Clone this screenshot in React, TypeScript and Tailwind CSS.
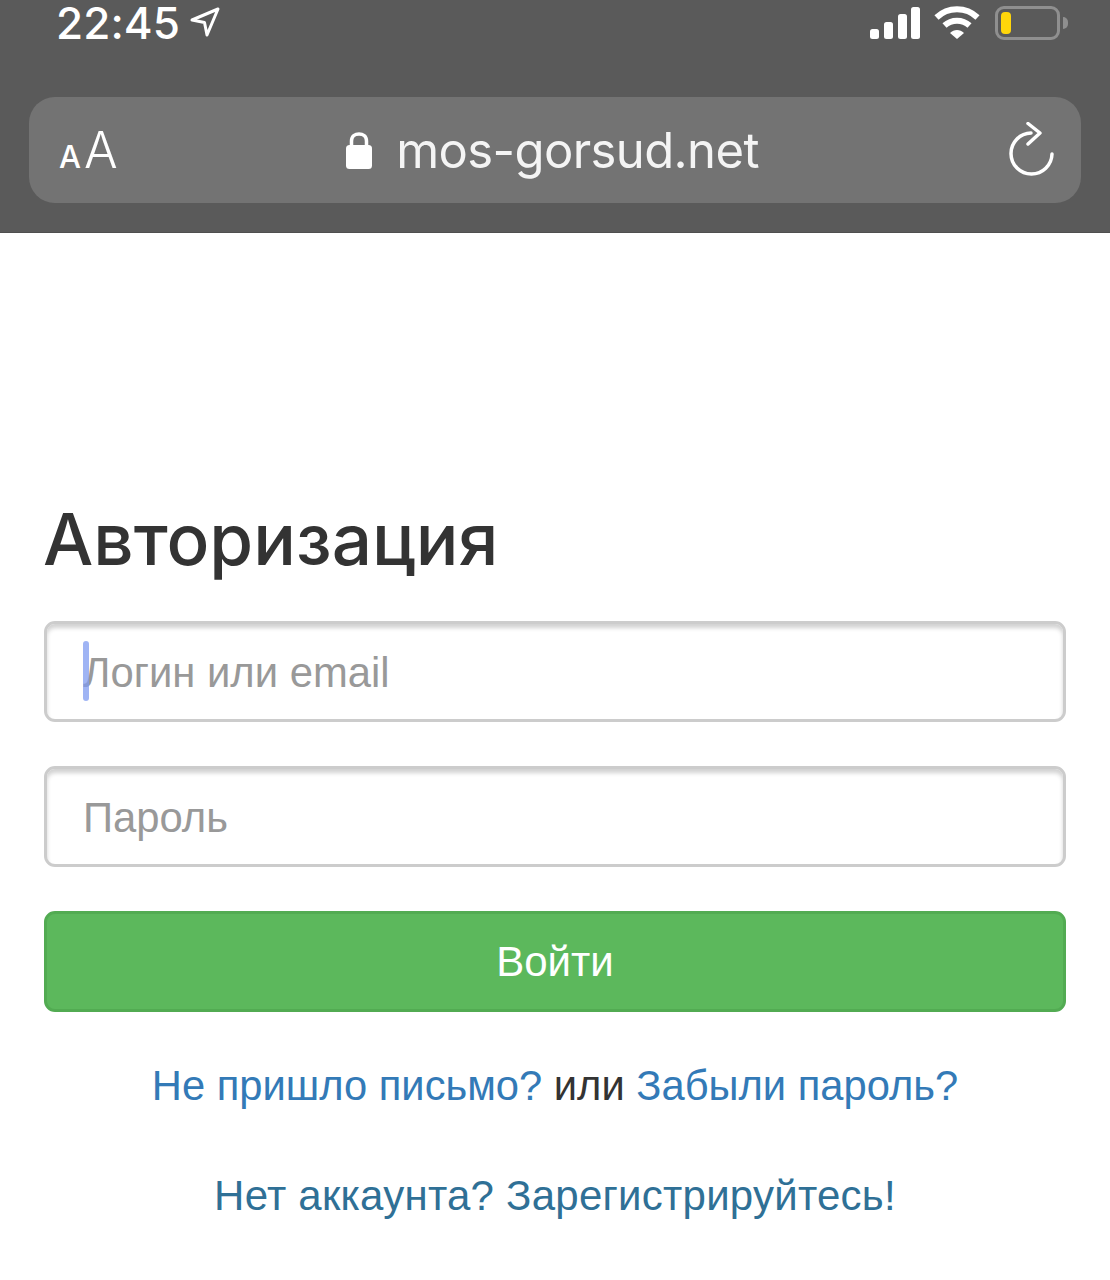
export default function App() {
  return (
    <div className="w-[1110px] h-[1280px] overflow-hidden bg-white font-['Liberation_Sans',Arial,sans-serif]">
      {/* Safari top chrome */}
      <div className="h-[233px] bg-[#5a5a5a] px-[29px] border-b border-[#4f4f4f]">
        <div className="h-[97px] flex items-start justify-between">
          <div className="flex items-center pl-[27px] pt-[1px]">
            <span className="text-[44px] leading-[44px] font-medium text-white font-['Inter',sans-serif] tracking-[0.1px]">22:45</span>
            <svg className="ml-[10px] mt-[-2px]" width="30" height="30" viewBox="0 0 30 30" fill="none">
              <path d="M2 13 L28 2 L17 28 L14.5 15.5 Z" stroke="white" strokeWidth="3" strokeLinejoin="round" />
            </svg>
          </div>
          <div className="flex items-center gap-[15px] pt-[6px] pr-[13px]">
            <svg className="-mr-[2px]" width="52" height="34" viewBox="0 0 52 34" fill="white">
              <rect x="1" y="23" width="9" height="10" rx="2.5" />
              <rect x="15" y="16" width="9" height="17" rx="2.5" />
              <rect x="29" y="8" width="9" height="25" rx="2.5" />
              <rect x="42" y="1" width="9" height="32" rx="2.5" />
            </svg>
            <svg width="46" height="34" viewBox="0 0 46 34" fill="none">
              <path d="M2.5 11.5 C14 0.5 32 0.5 43.5 11.5" stroke="white" strokeWidth="6" />
              <path d="M10.5 19.5 C17.5 13 28.5 13 35.5 19.5" stroke="white" strokeWidth="6" />
              <path d="M16 27 L23 33 L30 27 C26 23 20 23 16 27 Z" fill="white" />
            </svg>
            <div className="flex items-center">
              <div className="w-[65px] h-[34px] rounded-[9px] border-[3px] border-[#8f8f8f] p-[3px]">
                <div className="w-[10px] h-full rounded-[4px] bg-[#ffd60a]" />
              </div>
              <div className="ml-[3px] w-[5px] h-[12px] rounded-r-full bg-[#8f8f8f]" />
            </div>
          </div>
        </div>
        <div className="h-[106px] rounded-[26px] bg-[#737373] flex items-center justify-between pl-[30px] pr-[26px] relative">
          <div className="flex items-baseline gap-[3px] text-white font-['Inter',sans-serif] leading-none">
            <span className="text-[31px] font-medium">A</span>
            <span className="text-[50px] font-light">A</span>
          </div>
          <div className="absolute inset-0 flex items-center justify-center pr-[6px]">
            <svg className="mb-[1px]" width="28" height="40" viewBox="0 0 28 40" fill="none">
              <path d="M6.5 18 V11 C6.5 1.5 21.5 1.5 21.5 11 V18" stroke="white" strokeWidth="3.5" />
              <rect x="1" y="15" width="26" height="24" rx="3.5" fill="white" />
            </svg>
            <span className="ml-[23px] text-[49px] leading-none font-['Inter',sans-serif] font-normal tracking-[-0.6px] text-[#f4f4f4]">mos-gorsud.net</span>
          </div>
          <svg className="relative" width="48" height="56" viewBox="0 0 48 56" fill="none">
            <path d="M24 11 A20.5 20.5 0 1 0 45 32" stroke="white" strokeWidth="3.5" strokeLinecap="round" />
            <path d="M21 1.5 L33 11 L21 22" stroke="white" strokeWidth="3.5" strokeLinecap="round" strokeLinejoin="round" />
          </svg>
        </div>
      </div>

      {/* Login form */}
      <div className="px-[44px] pt-[264px]">
        <h1 className="font-['Inter',sans-serif] text-[71px] leading-[84px] font-medium text-[#333333] -ml-[1px]">Авторизация</h1>
        <div className="mt-[40px] relative">
          <input
            placeholder="Логин или email"
            className="block w-full h-[101px] rounded-[11px] border-[3px] border-[#cccccc] bg-white pl-[36px] pr-[37px] pt-[2px] text-[41.8px] text-[#555555] placeholder:text-[#999999] shadow-[inset_0_4px_4px_rgba(0,0,0,0.18)] outline-none"
          />
          <div className="absolute left-[39px] top-[20px] w-[6px] h-[60px] rounded-full bg-[#7f9bf0]/75" />
        </div>
        <input
          placeholder="Пароль"
          className="mt-[44px] block w-full h-[101px] rounded-[11px] border-[3px] border-[#cccccc] bg-white pl-[36px] pr-[37px] pt-[2px] text-[41.8px] text-[#555555] placeholder:text-[#999999] shadow-[inset_0_4px_4px_rgba(0,0,0,0.18)] outline-none"
        />
        <button className="mt-[44px] block w-full h-[101px] rounded-[11px] border-[3px] border-[#52ab52] bg-[#5cb85c] text-[42px] text-white">
          Войти
        </button>
        <p className="mt-[47px] text-center text-[41.7px] leading-[54px] text-[#333333]">
          <a className="text-[#337ab7]">Не пришло письмо?</a> или <a className="text-[#337ab7]">Забыли пароль?</a>
        </p>
        <p className="mt-[56px] text-center text-[42px] leading-[54px] tracking-[0.25px]">
          <a className="text-[#2f7096]">Нет аккаунта? Зарегистрируйтесь!</a>
        </p>
      </div>
    </div>
  );
}
